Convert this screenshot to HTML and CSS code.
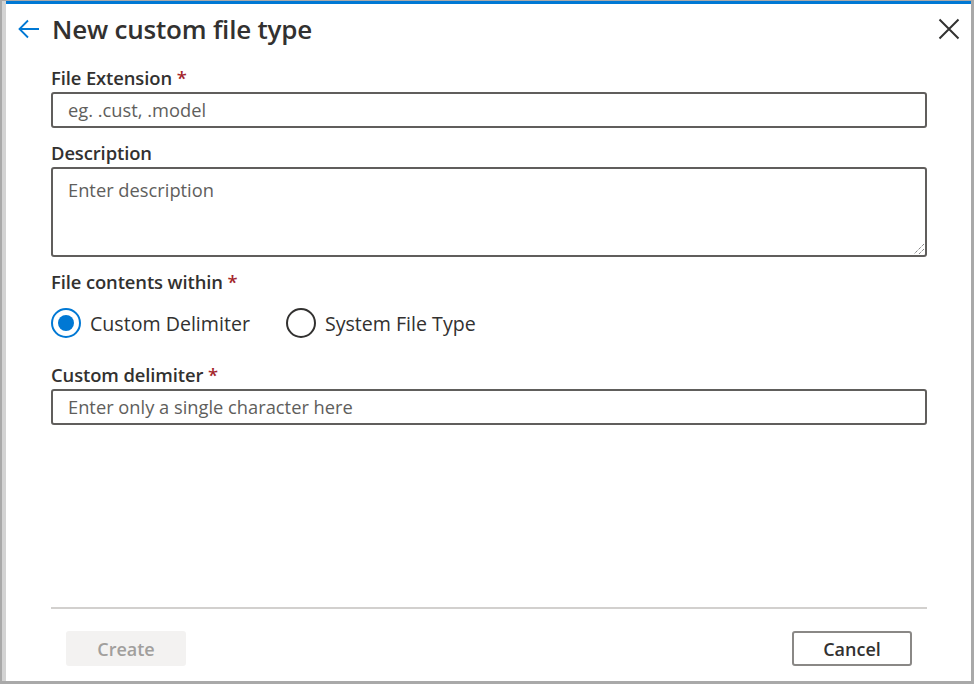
FILE: index.html
```html
<!DOCTYPE html>
<html lang="en">
<head>
<meta charset="utf-8">
<title>New custom file type</title>
<link rel="stylesheet" href="styles.css">
</head>
<body>
<div class="screen">
  <div class="backdrop"></div>
  <div class="dialog">
    <header class="header">
      <button class="icon-btn back" aria-label="Back">
        <svg width="22" height="20" viewBox="0 0 22 20"><path d="M10 1.5 L1.5 10 L10 18.5 M1.5 10 H21" fill="none" stroke="#0078d4" stroke-width="1.8"/></svg>
      </button>
      <h1 class="title">New custom file type</h1>
      <button class="icon-btn close" aria-label="Close">
        <svg width="22" height="22" viewBox="0 0 22 22"><path d="M1.5 1.5 L20.5 20.5 M20.5 1.5 L1.5 20.5" fill="none" stroke="#323130" stroke-width="2"/></svg>
      </button>
    </header>
    <main class="body">
      <div class="field">
        <label class="label">File Extension <span class="req">*</span></label>
        <div class="input">eg. .cust, .model</div>
      </div>
      <div class="field">
        <label class="label">Description</label>
        <div class="input textarea">Enter description
          <svg class="grip" width="14" height="14" viewBox="0 0 14 14"><path d="M13 3 L3 13 M13 8 L8 13" stroke="#505050" stroke-width="1" stroke-dasharray="1 1" fill="none"/></svg>
        </div>
      </div>
      <div class="field">
        <label class="label">File contents within <span class="req">*</span></label>
        <div class="radios">
          <div class="radio"><span class="dot checked"></span><span>Custom Delimiter</span></div>
          <div class="radio"><span class="dot"></span><span>System File Type</span></div>
        </div>
      </div>
      <div class="field delim">
        <label class="label">Custom delimiter <span class="req">*</span></label>
        <div class="input">Enter only a single character here</div>
      </div>
    </main>
    <footer class="footer">
      <div class="actions">
        <button class="btn primary" disabled>Create</button>
        <button class="btn">Cancel</button>
      </div>
    </footer>
  </div>
</div>
</body>
</html>
```
FILE: styles.css
```css
* { box-sizing: border-box; }
html, body { margin: 0; padding: 0; }
body {
  width: 974px;
  height: 684px;
  font-family: "Open Sans", "Noto Sans", sans-serif;
  color: #323130;
  background: #fff;
}
.screen {
  width: 974px;
  height: 684px;
  display: flex;
  border: 2px solid #a9a9a9;
  border-top-width: 1px;
  border-right-width: 3px;
  border-bottom-width: 3px;
}
.backdrop {
  width: 4px;
  background: #d3d3d3;
  flex: none;
}
.dialog {
  flex: 1;
  display: flex;
  flex-direction: column;
  border-top: 3px solid #0078d4;
  background: #fff;
}
.header {
  display: flex;
  align-items: center;
  height: 50px;
  padding: 0 11px 0 12px;
}
.icon-btn {
  border: 0;
  background: none;
  padding: 0;
  display: flex;
}
.back { width: 34px; }
.title {
  margin: 0;
  flex: 1;
  font-size: 26px;
  font-weight: 600;
  color: #323130;
  letter-spacing: -0.2px;
}
.body {
  flex: 1;
  padding: 0 44px 0 45px;
}
.field { display: flex; flex-direction: column; margin-top: 13px; }
.field:first-child { margin-top: 12px; }
.label {
  font-size: 18.4px;
  font-weight: 600;
  line-height: 24px;
  margin-bottom: 2px;
  letter-spacing: -0.1px;
}
.req { color: #a4262c; }
.input {
  height: 36px;
  border: 2px solid #605e5c;
  border-radius: 3px;
  padding: 0 15px;
  font-size: 18.3px;
  line-height: 32px;
  color: #605e5c;
}
.textarea {
  height: 90px;
  position: relative;
  padding-top: 5px;
}
.grip { position: absolute; right: 0; bottom: 0; }
.radios { display: flex; gap: 36px; margin-top: 12px; }
.radio { display: flex; align-items: center; gap: 9px; font-size: 19.6px; }
.dot {
  width: 30px; height: 30px;
  border: 2px solid #323130;
  border-radius: 50%;
  display: flex; align-items: center; justify-content: center;
}
.dot.checked { border-color: #0078d4; }
.dot.checked::after {
  content: ""; width: 16px; height: 16px; border-radius: 50%; background: #0078d4;
}
.delim { margin-top: 25px; }
.footer { padding: 0 44px 15px 45px; }
.actions {
  border-top: 2px solid #d2d0ce;
  display: flex;
  justify-content: space-between;
  padding: 22px 15px 0 15px;
}
.btn {
  width: 120px; height: 35px;
  font-family: inherit;
  font-size: 18px;
  font-weight: 600;
  border: 2px solid #8a8886;
  border-radius: 3px;
  background: #fff;
  color: #323130;
}
.btn.primary {
  border-color: #f3f2f1;
  background: #f3f2f1;
  color: #a19f9d;
}
```
